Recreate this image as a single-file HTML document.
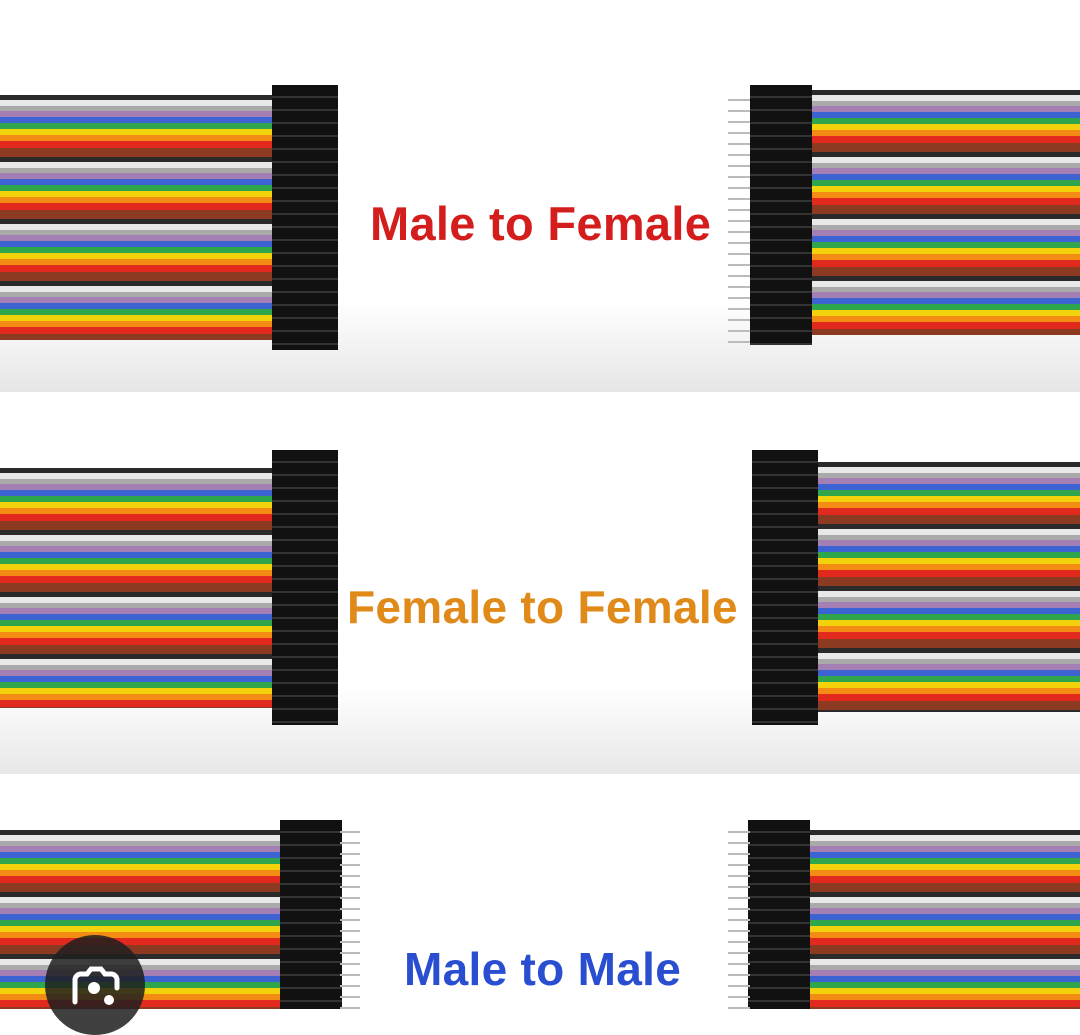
<!DOCTYPE html>
<html><head><style>
body{margin:0;width:1080px;height:1009px;overflow:hidden;background:#fff;position:relative;font-family:"Liberation Sans",sans-serif}
.sec{position:absolute;left:0;width:1080px}
.w{position:absolute;background:repeating-linear-gradient(to bottom,#2a2a2a 0 5px,#e8e8e8 5px 11px,#aaa 11px 16px,#a47fb4 16px 22px,#3d62d2 22px 28px,#2fa64c 28px 34px,#f2d20a 34px 40px,#f48b14 40px 46px,#e2291e 46px 53px,#8c3b22 53px 62px)}
.c{position:absolute;background:repeating-linear-gradient(to bottom,#111 0 11px,#333 11px 13px);}
.t{position:absolute;font-weight:bold;font-size:46px;white-space:nowrap;letter-spacing:0.3px}
.pin{position:absolute;background:repeating-linear-gradient(to bottom,transparent 0 9px,#bbb 9px 11px)}
</style></head><body>
<div class="sec" style="top:0;height:392px;background:linear-gradient(to bottom,#fff 0,#fff 300px,#e6e6e6 392px)"></div>
<div class="sec" style="top:396px;height:378px;background:linear-gradient(to bottom,#fff 0,#fff 290px,#e8e8e8 378px)"></div>
<div class="sec" style="top:778px;height:231px;background:#fff"></div>

<div class="w" style="left:0;top:95px;width:280px;height:245px"></div>
<div class="c" style="left:272px;top:85px;width:66px;height:265px"></div>
<div class="pin" style="left:728px;top:90px;width:25px;height:255px"></div>
<div class="w" style="left:805px;top:90px;width:275px;height:245px"></div>
<div class="c" style="left:750px;top:85px;width:62px;height:260px"></div>

<div class="w" style="left:0;top:468px;width:280px;height:240px"></div>
<div class="c" style="left:272px;top:450px;width:66px;height:275px"></div>
<div class="w" style="left:812px;top:462px;width:268px;height:250px"></div>
<div class="c" style="left:752px;top:450px;width:66px;height:275px"></div>

<div class="w" style="left:0;top:830px;width:285px;height:179px"></div>
<div class="c" style="left:280px;top:820px;width:62px;height:189px"></div>
<div class="pin" style="left:340px;top:822px;width:20px;height:187px"></div>
<div class="w" style="left:805px;top:830px;width:275px;height:179px"></div>
<div class="c" style="left:748px;top:820px;width:62px;height:189px"></div>
<div class="pin" style="left:728px;top:822px;width:22px;height:187px"></div>

<div class="t" style="left:370px;top:196px;color:#d41e1e;font-size:47px">Male to Female</div>
<div class="t" style="left:347px;top:580px;color:#e08a1a">Female to Female</div>
<div class="t" style="left:404px;top:942px;color:#2a4ed0">Male to Male</div>

<div style="position:absolute;left:45px;top:935px;width:100px;height:100px;border-radius:50%;background:rgba(30,30,30,.85)"></div>
<svg style="position:absolute;left:65px;top:960px" width="60" height="49" viewBox="0 0 60 49">
<path d="M10 42 V20 a6 6 0 0 1 6-6 h6 l4-5 h10 l4 5 h6 a6 6 0 0 1 6 6 v8" fill="none" stroke="#fff" stroke-width="5" stroke-linecap="round"/>
<circle cx="29" cy="28" r="6" fill="#fff"/><circle cx="44" cy="40" r="5" fill="#fff"/>
</svg>
</body></html>
